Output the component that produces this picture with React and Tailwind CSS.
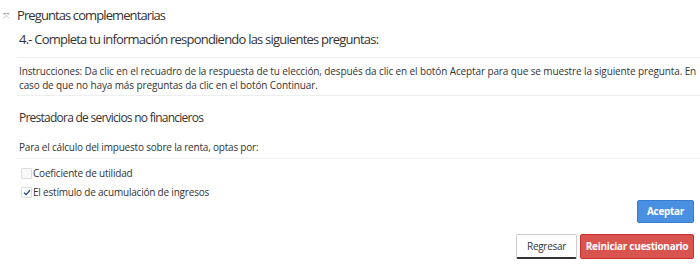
export default function App() {
  return (
    <div className="w-[700px] h-[273px] bg-white text-[#333] overflow-hidden" style={{ fontFamily: '"Open Sans", sans-serif' }}>
      <div className="flex items-center h-[30px] pt-[1px]">
        <span className="w-[17px] text-[8px] text-[#999] pl-[3px] leading-none">⤧</span>
        <span className="text-[13px] tracking-[-0.9px]">Preguntas complementarias</span>
      </div>
      <div className="pl-[19px] h-[19px] flex items-center text-[13px] tracking-[-0.78px]">4.- Completa tu información respondiendo las siguientes preguntas:</div>
      <div className="ml-[17px] mt-[8px] border-t border-[#eee]">
        <div className="pl-[2px] pt-[6px] pb-[3px] text-[10px] leading-[14px] tracking-[-0.12px] text-[#333]">
          Instrucciones: Da clic en el recuadro de la respuesta de tu elección, después da clic en el botón Aceptar para que se muestre la siguiente pregunta. En caso de que no haya más preguntas da clic en el botón Continuar.
        </div>
      </div>
      <div className="ml-[17px] border-t border-[#eee]">
        <div className="pl-[2px] pt-[13px] text-[12px] tracking-[-0.75px]">Prestadora de servicios no financieros</div>
        <div className="pl-[2px] pt-[13px] pb-[3px] text-[10px] tracking-[-0.2px]">Para el cálculo del impuesto sobre la renta, optas por:</div>
      </div>
      <div className="ml-[17px] border-t border-[#f2f2f2] pt-[7px] text-[10px] tracking-[-0.2px]">
        <label className="flex items-center h-[15px] pl-[4px]">
          <span className="w-[11px] h-[11px] border border-[#ddd] rounded-[1px] bg-[#f8f8f8] mr-[1px]"></span>
          <span>Coeficiente de utilidad</span>
        </label>
        <label className="flex items-center h-[15px] pl-[4px] mt-[4px]">
          <span className="w-[11px] h-[11px] border border-[#ddd] rounded-[1px] bg-white mr-[1px] flex items-center justify-center">
            <svg width="8" height="7" viewBox="0 0 8 7"><path d="M1 3.8 L3 5.6 L7 1.2" fill="none" stroke="#2a4a7a" strokeWidth="1.3" /></svg>
          </span>
          <span>El estímulo de acumulación de ingresos</span>
        </label>
      </div>
      <div className="flex justify-end pr-[6px] mt-0">
        <button className="w-[57px] h-[23px] bg-[#4a90e2] border border-[#3a7bd0] rounded-[2px] text-white text-[10px] font-bold tracking-[-0.3px]">Aceptar</button>
      </div>
      <div className="flex justify-end pr-[6px] mt-[11px] gap-[3px]">
        <button className="w-[61px] h-[25px] bg-white border border-[#ccc] border-b-[#333] border-b-2 rounded-[2px] text-[#333] text-[10px] tracking-[-0.3px]">Regresar</button>
        <button className="w-[114px] h-[25px] bg-[#d9534f] border border-[#c9302c] rounded-[2px] text-white text-[10px] font-bold tracking-[-0.3px]">Reiniciar cuestionario</button>
      </div>
    </div>
  );
}
